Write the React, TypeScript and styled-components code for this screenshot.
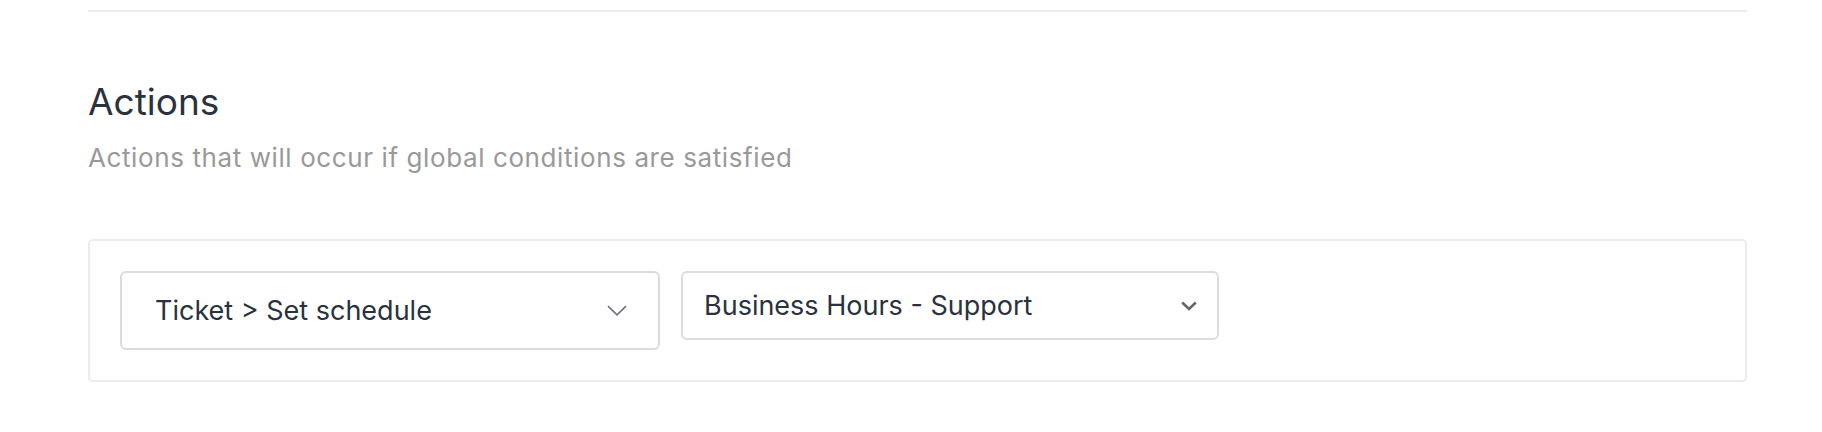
import * as React from 'react';
import styled, {createGlobalStyle} from 'styled-components';

const GlobalStyle = createGlobalStyle`
  html, body {
    margin: 0;
    padding: 0;
    background: #fff;
  }
  body {
    font-family: Inter, "Noto Sans", "Liberation Sans", sans-serif;
  }
`;

const Page = styled.div`
  padding: 10px 75px 40px 88px;
`;

const Divider = styled.div`
  height: 2px;
  background-color: #ededed;
`;

const Title = styled.h2`
  margin: 68px 0 0;
  font-size: 37px;
  line-height: 44px;
  font-weight: 400;
  color: #29323d;
`;

const Subtitle = styled.p`
  margin: 19px 0 0;
  font-size: 26px;
  line-height: 30px;
  letter-spacing: 0.6px;
  color: #999;
`;

const Panel = styled.div`
  margin-top: 66px;
  display: flex;
  align-items: flex-start;
  gap: 21px;
  padding: 30px;
  border: 2px solid #ebebeb;
  border-radius: 5px;
`;

// the two pickers are drawn a little differently (one is a custom
// dropdown, the other a plain native-looking select)
const Select = styled.div<{$tall?: boolean}>`
  box-sizing: border-box;
  display: flex;
  align-items: center;
  justify-content: space-between;
  width: ${p => (p.$tall ? '540px' : '538px')};
  height: ${p => (p.$tall ? '79px' : '69px')};
  padding: ${p => (p.$tall ? '0 31px 0 33px' : '0 20px 0 21px')};
  border: 2px solid ${p => (p.$tall ? '#d8dce1' : '#dcdcdc')};
  border-radius: 6px;
  background: #fff;
  font-size: 27px;
  color: #29323d;
  cursor: pointer;
`;

const Label = styled.span`
  white-space: nowrap;
`;

const ThinChevron = () => (
  <svg width='20' height='11' viewBox='0 0 20 11' fill='none'>
    <path d='M1 1.2 L10 9.8 L19 1.2' stroke='#6b7580' strokeWidth='1.6' />
  </svg>
);

const BoldChevron = () => (
  <svg width='16' height='10' viewBox='0 0 16 10' fill='none'>
    <path d='M1.2 1.5 L8 8 L14.8 1.5' stroke='#666' strokeWidth='2.6' />
  </svg>
);

export default function App() {
  return (
    <Page>
      <GlobalStyle />
      <Divider />
      <Title>Actions</Title>
      <Subtitle>Actions that will occur if global conditions are satisfied</Subtitle>
      <Panel>
        <Select $tall>
          <Label>Ticket &gt; Set schedule</Label>
          <ThinChevron />
        </Select>
        <Select>
          <Label>Business Hours - Support</Label>
          <BoldChevron />
        </Select>
      </Panel>
    </Page>
  );
}
